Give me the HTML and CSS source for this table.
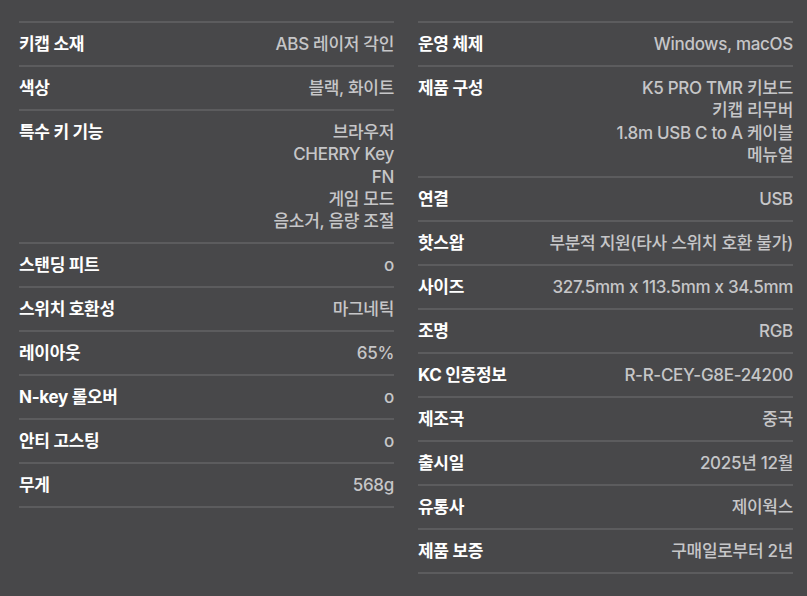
FILE: index.html
```html
<!DOCTYPE html>
<html lang="ko">
<head>
<meta charset="utf-8">
<link rel="stylesheet" href="styles.css">
</head>
<body>
<div class="specs">
  <dl class="col">
    <div class="row"><dt>키캡 소재</dt><dd>ABS 레이저 각인</dd></div>
    <div class="row"><dt>색상</dt><dd>블랙, 화이트</dd></div>
    <div class="row"><dt>특수 키 기능</dt><dd>브라우저<br>CHERRY Key<br>FN<br>게임 모드<br>음소거, 음량 조절</dd></div>
    <div class="row"><dt>스탠딩 피트</dt><dd>o</dd></div>
    <div class="row"><dt>스위치 호환성</dt><dd>마그네틱</dd></div>
    <div class="row"><dt>레이아웃</dt><dd>65%</dd></div>
    <div class="row"><dt>N-key 롤오버</dt><dd>o</dd></div>
    <div class="row"><dt>안티 고스팅</dt><dd>o</dd></div>
    <div class="row"><dt>무게</dt><dd>568g</dd></div>
  </dl>
  <dl class="col">
    <div class="row"><dt>운영 체제</dt><dd>Windows, macOS</dd></div>
    <div class="row"><dt>제품 구성</dt><dd>K5 PRO TMR 키보드<br>키캡 리무버<br>1.8m USB C to A 케이블<br>메뉴얼</dd></div>
    <div class="row"><dt>연결</dt><dd>USB</dd></div>
    <div class="row"><dt>핫스왑</dt><dd>부분적 지원(타사 스위치 호환 불가)</dd></div>
    <div class="row"><dt>사이즈</dt><dd>327.5mm x 113.5mm x 34.5mm</dd></div>
    <div class="row"><dt>조명</dt><dd>RGB</dd></div>
    <div class="row"><dt>KC 인증정보</dt><dd>R-R-CEY-G8E-24200</dd></div>
    <div class="row"><dt>제조국</dt><dd>중국</dd></div>
    <div class="row"><dt>출시일</dt><dd>2025년 12월</dd></div>
    <div class="row"><dt>유통사</dt><dd>제이웍스</dd></div>
    <div class="row"><dt>제품 보증</dt><dd>구매일로부터 2년</dd></div>
  </dl>
</div>
</body>
</html>
```
FILE: styles.css
```css
html, body {
  margin: 0;
  padding: 0;
  background: #48484a;
}
body {
  font-family: Inter, "Noto Sans CJK KR", sans-serif;
  font-size: 17px;
  letter-spacing: -0.3px;
}
.specs {
  display: grid;
  grid-template-columns: 375px 375px;
  column-gap: 24px;
  padding: 21px 14px 0 19px;
  align-items: start;
}
.col {
  margin: 0;
  border-bottom: 2px solid #5c5c5e;
}
.row {
  display: flex;
  justify-content: space-between;
  align-items: flex-start;
  border-top: 2px solid #5c5c5e;
  padding: 10px 0 9.75px;
  line-height: 22.25px;
}
dt {
  margin: 0;
  color: #ffffff;
  font-weight: 700;
  white-space: nowrap;
}
dd {
  margin: 0;
  color: #c6c6c8;
  font-weight: 500;
  text-align: right;
}
```
